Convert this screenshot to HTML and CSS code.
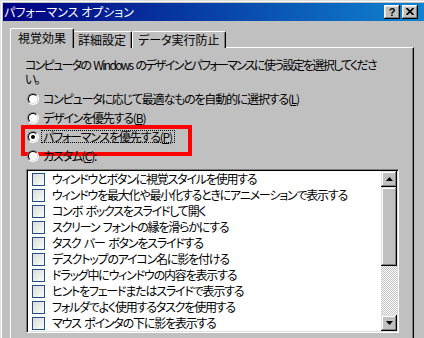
FILE: index.html
```html
<!DOCTYPE html>
<html lang="ja">
<head>
<meta charset="utf-8">
<title>パフォーマンス オプション</title>
<link rel="stylesheet" href="styles.css">
</head>
<body>
<div class="window">
  <div class="titlebar">
    <span class="title">パフォーマンス オプション</span>
    <div class="tbtns">
      <span class="tbtn help">?</span>
      <span class="tbtn close"><svg width="8" height="7" viewBox="0 0 8 7"><path d="M0.5 0 L7.5 7 M7.5 0 L0.5 7" stroke="#000" stroke-width="1.7"/></svg></span>
    </div>
  </div>
  <div class="content">
    <div class="tabs">
      <div class="tab selected">視覚効果</div>
      <div class="tab">詳細設定</div>
      <div class="tab">データ実行防止</div>
    </div>
    <div class="panel">
      <p class="desc">コンピュータの Windows のデザインとパフォーマンスに使う設定を選択してくださ<br>い。</p>
      <div class="radios">
        <div class="radio"><span class="circle"></span><span class="rlabel">コンピュータに応じて最適なものを自動的に選択する(<u>L</u>)</span></div>
        <div class="radio"><span class="circle"></span><span class="rlabel">デザインを優先する(<u>B</u>)</span></div>
        <div class="radio annotated"><span class="circle checked"></span><span class="rlabel focus">パフォーマンスを優先する(<u>P</u>)</span></div>
        <div class="radio"><span class="circle"></span><span class="rlabel">カスタム(<u>C</u>):</span></div>
      </div>
      <div class="listbox">
        <ul class="items">
          <li><span class="check"></span>ウィンドウとボタンに視覚スタイルを使用する</li>
          <li><span class="check"></span>ウィンドウを最大化や最小化するときにアニメーションで表示する</li>
          <li><span class="check"></span>コンボ ボックスをスライドして開く</li>
          <li><span class="check"></span>スクリーン フォントの縁を滑らかにする</li>
          <li><span class="check"></span>タスク バー ボタンをスライドする</li>
          <li><span class="check"></span>デスクトップのアイコン名に影を付ける</li>
          <li><span class="check"></span>ドラッグ中にウィンドウの内容を表示する</li>
          <li><span class="check"></span>ヒントをフェードまたはスライドで表示する</li>
          <li><span class="check"></span>フォルダでよく使用するタスクを使用する</li>
          <li><span class="check"></span>マウス ポインタの下に影を表示する</li>
        </ul>
        <div class="scrollbar">
          <div class="sbtn"><svg width="7" height="4" viewBox="0 0 7 4"><path d="M3.5 0 L7 4 L0 4 Z" fill="#000"/></svg></div>
          <div class="thumb"></div>
          <div class="track"></div>
          <div class="sbtn"><svg width="7" height="4" viewBox="0 0 7 4"><path d="M0 0 L7 0 L3.5 4 Z" fill="#000"/></svg></div>
        </div>
      </div>
    </div>
  </div>
</div>
</body>
</html>
```
FILE: styles.css
```css
* { box-sizing: border-box; }
html, body { margin: 0; padding: 0; }
body {
  width: 424px;
  height: 338px;
  overflow: hidden;
  background: #c0c0c0;
  font-family: "Noto Sans CJK JP", "Noto Sans", sans-serif;
  font-size: 12px;
  color: #000;
  font-feature-settings: "palt";
}
.window {
  width: 424px;
  height: 338px;
  padding: 3px 0 0 3px;
  background: #c0c0c0;
  box-shadow: inset 1px 1px #dfdfdf, inset 2px 2px #fff;
  overflow: hidden;
}
.titlebar {
  height: 18px;
  display: flex;
  align-items: center;
  padding: 0 6px 0 1px;
  background: linear-gradient(to right, #000080, #1084d0);
  color: #fff;
}
.title { line-height: 18px; white-space: nowrap; }
.tbtns { margin-left: auto; display: flex; gap: 2px; }
.tbtn {
  width: 16px;
  height: 14px;
  background: #c0c0c0;
  box-shadow: inset -1px -1px #000, inset 1px 1px #fff, inset -2px -2px #808080, inset 2px 2px #dfdfdf;
  display: flex;
  align-items: center;
  justify-content: center;
  color: #000;
}
.help { font-family: "Liberation Sans", sans-serif; font-weight: bold; font-size: 11px; line-height: 14px; padding-bottom: 1px; }
.close svg { display: block; margin-top: -1px; }
.content { padding: 7px 0 0 7px; }
.tabs {
  display: flex;
  height: 20px;
  position: relative;
  z-index: 1;
}
.tab {
  height: 17px;
  margin-top: 3px;
  padding: 0 5px;
  line-height: 15px;
  white-space: nowrap;
  background: #c0c0c0;
  border-left: 1px solid #fff;
  border-top: 1px solid #fff;
  border-right: 1px solid #000;
  border-radius: 2px 2px 0 0;
  box-shadow: inset -1px 0 #808080;
}
.tab.selected {
  height: 20px;
  margin-top: 0;
  margin-right: -2px;
  padding: 0 7px;
  line-height: 18px;
  position: relative;
  z-index: 2;
}
.panel {
  margin-top: -1px;
  width: 404px;
  height: 300px;
  background: #c0c0c0;
  border-left: 1px solid #fff;
  border-top: 1px solid #fff;
  border-right: 1px solid #000;
  box-shadow: inset -1px 0 #808080;
  padding-top: 10px;
  letter-spacing: -1.2px;
  word-spacing: 2px;
}
.desc {
  margin: 0 0 0 14px;
  width: 384px;
  line-height: 14px;
  white-space: nowrap;
  letter-spacing: -1.7px;
}
.radios { margin: 3px 0 0 16px; }
.radio {
  height: 19px;
  display: flex;
  align-items: center;
  gap: 4px;
  position: relative;
  white-space: nowrap;
}
.circle {
  width: 12px;
  height: 12px;
  border-radius: 50%;
  border: 1px solid;
  border-color: #808080 #fff #fff #808080;
  position: relative;
  flex: none;
}
.circle::before {
  content: "";
  position: absolute;
  inset: 0;
  border-radius: 50%;
  border: 1px solid;
  border-color: #000 #dfdfdf #dfdfdf #000;
  background: #fff;
}
.circle.checked::after {
  content: "";
  position: absolute;
  left: 3px;
  top: 3px;
  width: 4px;
  height: 4px;
  border-radius: 50%;
  background: #000;
}
.rlabel { line-height: 13px; }
.rlabel.focus {
  margin-left: -2px;
  padding: 0 2px 0 1px;
  border: 1px dotted #000;
  line-height: 11px;
}
.annotated::after {
  content: "";
  position: absolute;
  left: -6px;
  top: -2px;
  width: 163px;
  height: 23px;
  border: 4px solid #f00;
  pointer-events: none;
}
.listbox {
  margin: 4px 0 0 15px;
  width: 373px;
  height: 164px;
  display: flex;
  padding: 1px;
  background: #fff;
  border: 1px solid;
  border-color: #808080 #fff #fff #808080;
  box-shadow: inset 1px 1px #000, inset -1px -1px #dfdfdf;
}
.items {
  list-style: none;
  margin: 0;
  padding: 0;
  flex: 1;
  overflow: hidden;
}
.items li {
  height: 16px;
  display: flex;
  align-items: center;
  padding-left: 4px;
  gap: 7px;
  white-space: nowrap;
  line-height: 16px;
}
.check {
  width: 13px;
  height: 13px;
  flex: none;
  border: 1px solid #1c5180;
  background: linear-gradient(135deg, #dcdcd7, #fbfbf9);
}
.scrollbar {
  width: 16px;
  display: flex;
  flex-direction: column;
}
.sbtn, .thumb {
  background: #c0c0c0;
  box-shadow: inset -1px -1px #000, inset 1px 1px #dfdfdf, inset -2px -2px #808080, inset 2px 2px #fff;
}
.sbtn {
  height: 16px;
  display: flex;
  align-items: center;
  justify-content: center;
}
.sbtn svg { display: block; }
.thumb { height: 79px; }
.track {
  flex: 1;
  background: repeating-conic-gradient(#c0c0c0 0 25%, #fff 0 50%) 0 0 / 2px 2px;
}
```
